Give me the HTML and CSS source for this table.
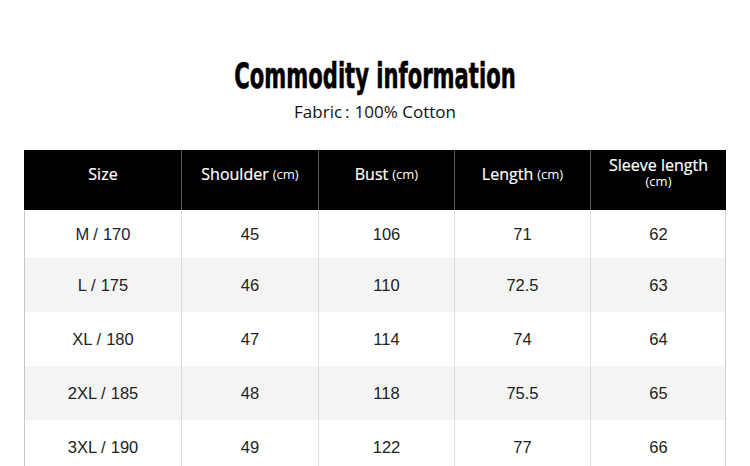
FILE: index.html
```html
<!DOCTYPE html>
<html>
<head>
<meta charset="utf-8">
<link rel="stylesheet" href="styles.css">
</head>
<body>
<div class="page">
  <h1 class="title">Commodity information</h1>
  <p class="subtitle">Fabric<span class="colon">:</span>100% Cotton</p>
  <div class="table">
    <div class="row head">
      <div class="cell">Size</div>
      <div class="cell">Shoulder <small>(cm)</small></div>
      <div class="cell">Bust <small>(cm)</small></div>
      <div class="cell">Length <small>(cm)</small></div>
      <div class="cell stack"><span class="line">Sleeve length</span><small>(cm)</small></div>
    </div>
    <div class="row first">
      <div class="cell">M<span class="sl">/</span>170</div>
      <div class="cell">45</div><div class="cell">106</div><div class="cell">71</div><div class="cell">62</div>
    </div>
    <div class="row alt">
      <div class="cell">L<span class="sl">/</span>175</div>
      <div class="cell">46</div><div class="cell">110</div><div class="cell">72.5</div><div class="cell">63</div>
    </div>
    <div class="row">
      <div class="cell">XL<span class="sl">/</span>180</div>
      <div class="cell">47</div><div class="cell">114</div><div class="cell">74</div><div class="cell">64</div>
    </div>
    <div class="row alt">
      <div class="cell">2XL<span class="sl">/</span>185</div>
      <div class="cell">48</div><div class="cell">118</div><div class="cell">75.5</div><div class="cell">65</div>
    </div>
    <div class="row">
      <div class="cell">3XL<span class="sl">/</span>190</div>
      <div class="cell">49</div><div class="cell">122</div><div class="cell">77</div><div class="cell">66</div>
    </div>
  </div>
</div>
</body>
</html>
```

FILE: styles.css
```css
html, body {
  margin: 0;
  padding: 0;
  background: #fff;
}
.page {
  width: 750px;
  height: 466px;
  overflow: hidden;
  padding-top: 56px;
  box-sizing: border-box;
}
.title {
  margin: 0;
  text-align: center;
  font-family: "Liberation Sans Narrow", "DejaVu Sans Condensed", "Liberation Sans", sans-serif;
  font-weight: bold;
  font-size: 35px;
  line-height: 40px;
  color: #000;
  transform: scaleX(0.67);
  -webkit-text-stroke: 0.6px #000;
}
.subtitle {
  margin: 5px 0 0;
  text-align: center;
  font-family: "Open Sans", "Noto Sans", sans-serif;
  font-size: 17px;
  line-height: 22px;
  color: #111;
}
.colon {
  margin: 0 5px 0 3px;
}
.table {
  margin: 27px 0 0 24px;
  width: 702px;
}
.row {
  display: grid;
  grid-template-columns: 157px 137px 136px 136px 136px;
  height: 54px;
  border-right: 1px solid #cfcfcf;
}
.row.first {
  height: 48px;
}
.row.alt {
  background: #f4f4f4;
}
.cell {
  display: flex;
  align-items: center;
  justify-content: center;
  border-left: 1px solid #dcdcdc;
  font-family: "Liberation Sans", Arial, sans-serif;
  font-size: 16.5px;
  color: #222;
}
.row .cell:first-child {
  border-left-color: #c8c8c8;
}
.sl {
  margin: 0 5px 0 4px;
}
.row.head {
  height: 60px;
  background: #000;
  border-right: 1px solid #000;
}
.row.head .cell {
  border-left: 1px solid #5a5a5a;
  padding-bottom: 12px;
  font-family: "Open Sans", "Noto Sans", sans-serif;
  font-size: 16px;
  color: #fff;
  -webkit-text-stroke: 0.2px #fff;
}
.row.head .cell:first-child {
  border-left-color: #000;
}
.row.head small {
  font-size: 13px;
  margin-left: 4px;
  -webkit-text-stroke: 0;
}
.row.head .stack {
  flex-direction: column;
  padding-bottom: 14px;
}
.row.head .stack .line {
  line-height: 15px;
}
.row.head .stack small {
  margin-left: 0;
  margin-top: 1px;
  line-height: 14px;
}
```
